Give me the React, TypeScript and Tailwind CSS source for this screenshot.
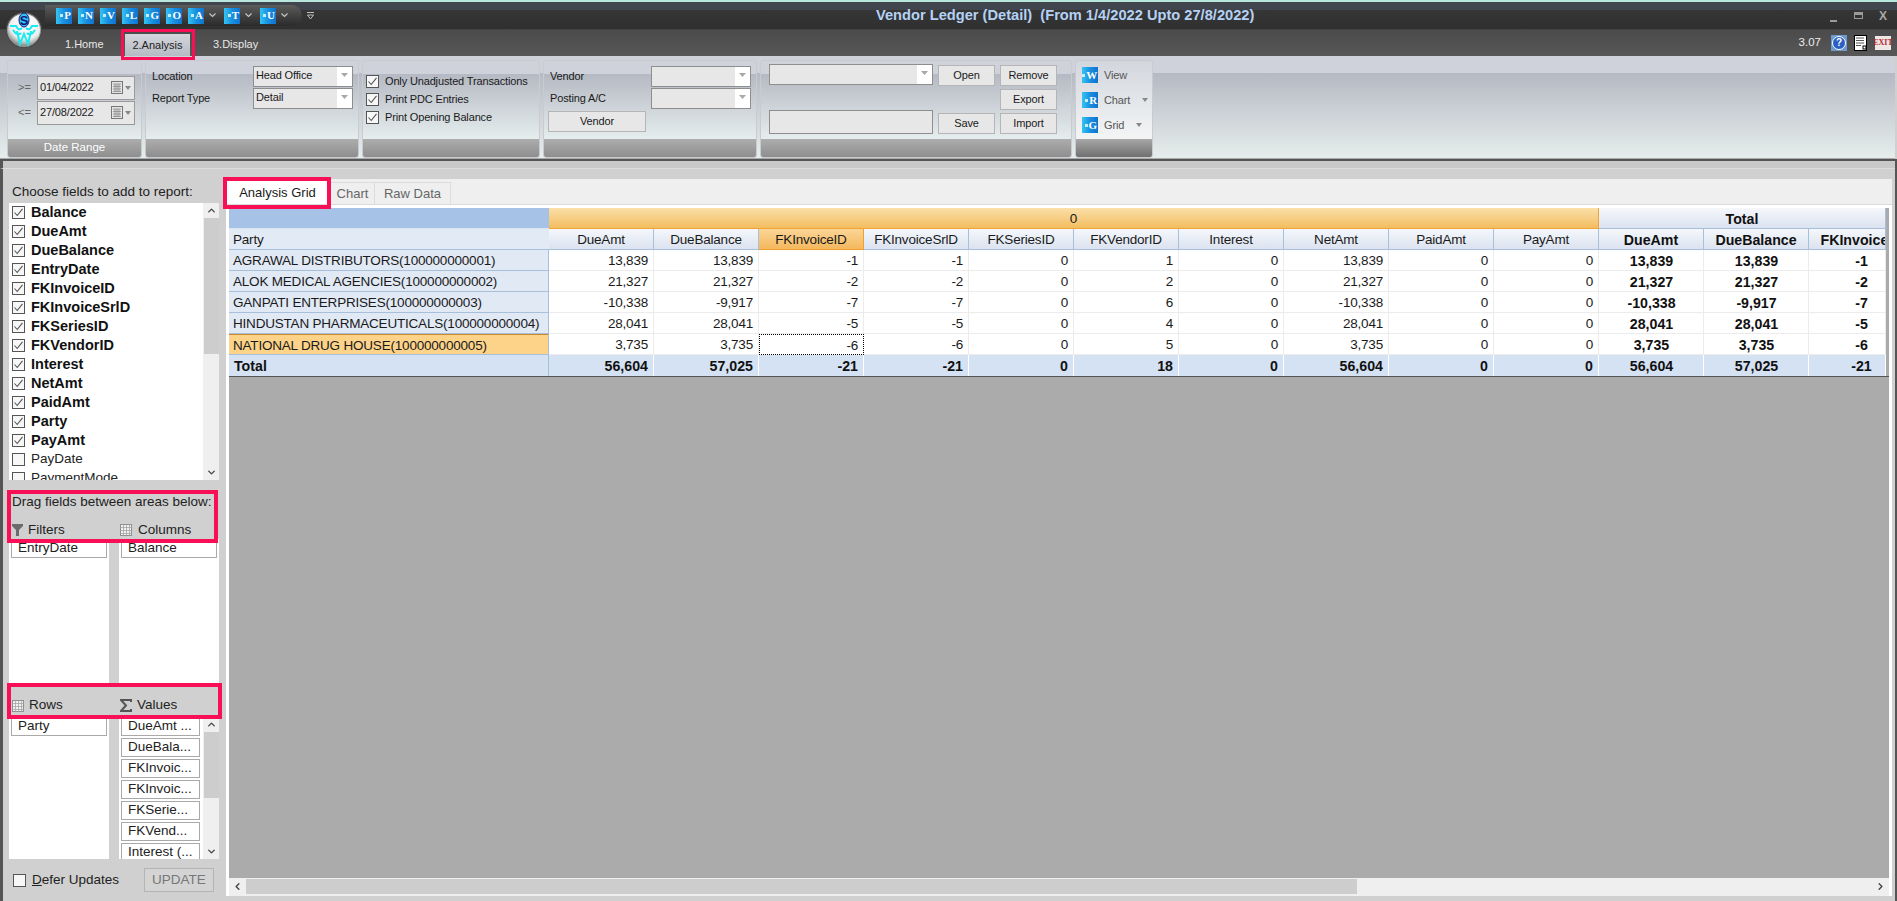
import { ChevronDown, ChevronLeft, ChevronRight, ChevronUp } from "lucide-react";

const FIELDS = [
  "Balance", "DueAmt", "DueBalance", "EntryDate", "FKInvoiceID", "FKInvoiceSrlD", "FKSeriesID",
  "FKVendorID", "Interest", "NetAmt", "PaidAmt", "Party", "PayAmt",
];

const COLS = [
  "DueAmt", "DueBalance", "FKInvoiceID", "FKInvoiceSrlD", "FKSeriesID", "FKVendorID",
  "Interest", "NetAmt", "PaidAmt", "PayAmt",
];

const ROWS: { name: string; v: string[]; t: string[] }[] = [
  { name: "AGRAWAL DISTRIBUTORS(100000000001)", v: ["13,839", "13,839", "-1", "-1", "0", "1", "0", "13,839", "0", "0"], t: ["13,839", "13,839", "-1"] },
  { name: "ALOK MEDICAL AGENCIES(100000000002)", v: ["21,327", "21,327", "-2", "-2", "0", "2", "0", "21,327", "0", "0"], t: ["21,327", "21,327", "-2"] },
  { name: "GANPATI ENTERPRISES(100000000003)", v: ["-10,338", "-9,917", "-7", "-7", "0", "6", "0", "-10,338", "0", "0"], t: ["-10,338", "-9,917", "-7"] },
  { name: "HINDUSTAN PHARMACEUTICALS(100000000004)", v: ["28,041", "28,041", "-5", "-5", "0", "4", "0", "28,041", "0", "0"], t: ["28,041", "28,041", "-5"] },
  { name: "NATIONAL DRUG HOUSE(100000000005)", v: ["3,735", "3,735", "-6", "-6", "0", "5", "0", "3,735", "0", "0"], t: ["3,735", "3,735", "-6"] },
];

const TOTALS = ["56,604", "57,025", "-21", "-21", "0", "18", "0", "56,604", "0", "0"];
const GRAND = ["56,604", "57,025", "-21"];

function Tile({ letter }: { letter: string }) {
  return (
    <span className="flex h-[16px] w-[16px] shrink-0 items-center justify-end bg-gradient-to-r from-[#35c4f2] via-[#1a8fe0] to-[#0f74cf] pr-[1px] font-['Liberation_Serif',serif] text-[11px] leading-none font-bold text-white">
      <span className="mr-[1px] h-[3px] w-[3px] bg-[#c7ecfb]" />
      {letter}
    </span>
  );
}

function SmallCaret({ color = "#c8c8c8" }: { color?: string }) {
  return (
    <svg width="7" height="5" viewBox="0 0 7 5" className="shrink-0">
      <path d="M0.5 0.5 L3.5 3.5 L6.5 0.5" fill="none" stroke={color} strokeWidth="1.2" />
    </svg>
  );
}

function Combo({ text, w }: { text?: string; w: string }) {
  return (
    <div className={`flex h-[21px] items-start justify-between border border-[#8e8e8e] bg-[#e7e7e7] pl-[2px] ${w}`}>
      <span className="pt-[1px] text-[11px] leading-[15px] tracking-[-0.15px]">{text}</span>
      <span className="flex h-full w-[15px] items-center justify-center bg-white pb-[3px]">
        <svg width="7" height="4" viewBox="0 0 7 4">
          <path d="M0 0 H7 L3.5 4 Z" fill="#a8a8a8" />
        </svg>
      </span>
    </div>
  );
}

function DateBox({ label, value }: { label: string; value: string }) {
  return (
    <div className="flex h-[25px] items-center">
      <span className="w-[20px] pl-[1px] text-[11px] text-[#666]">{label}</span>
      <div className="flex h-[24px] w-[98px] items-center border border-[#9a9a9a] bg-[#e7e7e7] pl-[2px]">
        <span className="w-[71px] text-[11px] tracking-[-0.15px]">{value}</span>
        <svg width="12" height="13" viewBox="0 0 12 13">
          <rect x="0.5" y="0.5" width="11" height="12" fill="#e4e4e4" stroke="#777" />
          <path d="M2 3 H10 M2 5.5 H10 M2 8 H10 M2 10.5 H10 M4 3 V11 M6 3 V11 M8 3 V11" stroke="#8a8a8a" strokeWidth="0.8" />
        </svg>
        <span className="ml-[2px]">
          <svg width="6" height="4" viewBox="0 0 6 4">
            <path d="M0 0 H6 L3 4 Z" fill="#888" />
          </svg>
        </span>
      </div>
    </div>
  );
}

function Check({ on }: { on: boolean }) {
  return (
    <span className="flex h-[13px] w-[13px] shrink-0 items-center justify-center border border-[#555] bg-[#f7f7f7]">
      {on && (
        <svg width="11" height="11" viewBox="0 0 11 11">
          <path d="M1.5 5.5 L4.2 8.5 L9.5 1.8" fill="none" stroke="#555" strokeWidth="1.1" />
        </svg>
      )}
    </span>
  );
}

function RibbonBtn({ text, w }: { text: string; w: string }) {
  return (
    <div className={`flex h-[21px] items-center justify-center border border-[#b5b5b5] bg-[#e7e7e7] text-[11px] tracking-[-0.15px] ${w}`}>
      {text}
    </div>
  );
}

function Group({ w, caption, children, light }: { w: string; caption?: string; children: React.ReactNode; light?: boolean }) {
  return (
    <div className={`flex h-[98px] flex-col overflow-hidden rounded-[3px] border border-[#c9cbd0] ${w}`}>
      <div
        className={`h-[78px] ${
          light
            ? "bg-gradient-to-b from-[#d3d6dd] to-[#f3f5f5]"
            : "bg-[linear-gradient(#cfd2da_0,#cfd2da_13px,#b5b9c3_13px,#e5eded_100%)]"
        }`}
      >
        {children}
      </div>
      <div
        className={`flex h-[18px] items-center justify-center text-[11.5px] text-white ${
          light ? "bg-gradient-to-b from-[#a8a8a8] to-[#707070]" : "bg-gradient-to-b from-[#adadad] to-[#8e8e8e]"
        }`}
      >
        {caption}
      </div>
    </div>
  );
}

function VScroll({ thumbH }: { thumbH: string }) {
  return (
    <div className="flex h-full w-[16px] shrink-0 flex-col items-center bg-[#efefef]">
      <div className="flex h-[15px] w-full shrink-0 items-center justify-center text-[#444]">
        <ChevronUp size={11} strokeWidth={3} />
      </div>
      <div className={`w-[15px] shrink-0 bg-[#cdcdcd] ${thumbH}`} />
      <div className="mt-auto flex h-[15px] w-full shrink-0 items-center justify-center text-[#444]">
        <ChevronDown size={11} strokeWidth={3} />
      </div>
    </div>
  );
}

function Pill({ text, w }: { text: string; w: string }) {
  return (
    <div className={`mb-[2px] flex h-[19px] shrink-0 items-center overflow-hidden border border-[#a9a9a9] bg-white pl-[6px] text-[13.5px] whitespace-nowrap text-[#222] ${w}`}>
      {text}
    </div>
  );
}

function GridIcon() {
  return (
    <svg width="12" height="12" viewBox="0 0 12 12">
      <rect x="0.5" y="0.5" width="11" height="11" fill="#f1f1f1" stroke="#8f8f8f" />
      <path d="M0.5 3.5 H11.5 M0.5 6.5 H11.5 M0.5 9.5 H11.5 M3.5 0.5 V11.5 M6.5 0.5 V11.5 M9.5 0.5 V11.5" stroke="#a5a5a5" strokeWidth="0.8" />
    </svg>
  );
}

const cell = "flex h-[21px] items-center overflow-hidden whitespace-nowrap pt-[3px] text-[13.5px] tracking-[-0.2px] text-[#1a1a1a]";
const boldCell = "flex h-[21px] items-center overflow-hidden whitespace-nowrap pt-[3px] text-[14.2px] font-bold text-[#111]";
const colHeader = "bg-gradient-to-b from-[#f5f7fb] to-[#dbe3f0] border-r border-b border-[#a8bfdb]";

export default function App() {
  return (
    <div className="relative flex h-[901px] w-[1897px] flex-col overflow-hidden bg-[#d0d0d0] font-['Liberation_Sans',sans-serif] text-[#1a1a1a]">
      <div className="h-[2px] shrink-0 bg-[#b9e6dd]" />

      {/* title bar */}
      <div className="flex h-[28px] shrink-0 items-center border-b border-[#444] bg-[linear-gradient(#41454e_0,#41454e_8px,#363636_8px,#2f2f2f_100%)]">
        <div className="ml-[45px] flex h-[21px] w-[257px] items-center rounded-r-full bg-gradient-to-b from-[#5c5c5c] to-[#2b2b2b] pl-[11px]">
          {["P", "N", "V", "L", "G", "O"].map((l) => (
            <span key={l} className="mr-[6px]">
              <Tile letter={l} />
            </span>
          ))}
          <Tile letter="A" />
          <span className="mr-[8px] ml-[5px]"><SmallCaret /></span>
          <Tile letter="T" />
          <span className="mr-[8px] ml-[5px]"><SmallCaret /></span>
          <Tile letter="U" />
          <span className="ml-[5px]"><SmallCaret /></span>
        </div>
        <svg width="7" height="8" viewBox="0 0 7 8" className="ml-[5px]">
          <path d="M0 0.5 H7 M0.5 3 L3.5 7 L6.5 3 Z" fill="none" stroke="#bdbdbd" />
        </svg>
        <div className="ml-[562px] text-[14.65px] font-bold whitespace-pre text-[#b4d2f5]">
          Vendor Ledger (Detail)  (From 1/4/2022 Upto 27/8/2022)
        </div>
        <div className="ml-auto flex items-center pr-[10px]">
          <span className="mt-[10px] h-[2px] w-[7px] bg-[#9a9a9a]" />
          <span className="ml-[17px] h-[7px] w-[9px] border border-t-[3px] border-[#9a9a9a]" />
          <span className="ml-[16px] text-[12px] leading-none font-bold text-[#a8a8a8]">X</span>
        </div>
      </div>

      {/* tab row */}
      <div className="flex h-[26px] shrink-0 items-center bg-gradient-to-b from-[#4b4b4b] to-[#575757] text-[11px] text-[#e8e8e8]">
        <span className="mt-[2px] ml-[65px] w-[60px]">1.Home</span>
        <span className="flex h-[22px] w-[65px] items-center justify-center self-end bg-gradient-to-b from-[#d4d6dc] to-[#b6bac4] text-[#222]">2.Analysis</span>
        <span className="mt-[2px] ml-[23px]">3.Display</span>
        <div className="ml-auto flex items-center">
          <span className="mr-[10px] text-[11.5px] text-[#eee]">3.07</span>
          <span className="mr-[7px] flex h-[16px] w-[16px] items-center justify-center bg-[#6d9bd0]">
            <span className="flex h-[14px] w-[14px] items-center justify-center rounded-full border border-white bg-[#2b5fc4] text-[10px] leading-none font-bold text-white">?</span>
          </span>
          <svg width="14" height="16" viewBox="0 0 14 16" className="mr-[7px]">
            <rect x="0.5" y="0.5" width="12" height="15" fill="#fff" stroke="#000" />
            <path d="M2 3 H10 M2 5.5 H10 M2 8 H10 M2 10.5 H7" stroke="#555" />
            <rect x="9" y="11" width="3" height="3" fill="#fff" stroke="#000" />
          </svg>
          <span className="mr-[6px] flex h-[14px] w-[16px] items-center justify-center bg-[#efe6e6] font-['Liberation_Serif',serif] text-[8px] leading-none font-bold text-[#b02a30]">EXIT</span>
        </div>
      </div>

      {/* ribbon */}
      <div className="mr-[2px] flex h-[103px] shrink-0 gap-[3px] rounded-tr-[3px] border-b border-[#aaa] bg-[linear-gradient(#cfd2da_0,#cfd2da_17px,#b5b9c3_17px,#e6eeec_100%)] pt-[4px] pl-[7px]">
        <Group w="w-[135px]" caption="Date Range">
          <div className="pt-[14px] pl-[9px]">
            <DateBox label=">=" value="01/04/2022" />
            <DateBox label="<=" value="27/08/2022" />
          </div>
        </Group>
        <Group w="w-[214px]">
          <div className="grid grid-cols-[101px_100px] items-center gap-y-[1px] pt-[5px] pl-[6px] text-[11px] tracking-[-0.15px]">
            <span>Location</span>
            <Combo text="Head Office" w="w-[100px]" />
            <span>Report Type</span>
            <Combo text="Detail" w="w-[100px]" />
          </div>
        </Group>
        <Group w="w-[178px]">
          <div className="flex flex-col pt-[11px] pl-[3px] text-[11px] tracking-[-0.15px]">
            {["Only Unadjusted Transactions", "Print PDC Entries", "Print Opening Balance"].map((t) => (
              <div key={t} className="flex h-[18px] items-center gap-[6px]">
                <Check on />
                {t}
              </div>
            ))}
          </div>
        </Group>
        <Group w="w-[214px]">
          <div className="pt-[5px] pl-[6px] text-[11px] tracking-[-0.15px]">
            <div className="grid grid-cols-[101px_100px] items-center gap-y-[1px]">
              <span>Vendor</span>
              <Combo w="w-[100px]" />
              <span>Posting A/C</span>
              <Combo w="w-[100px]" />
            </div>
            <div className="mt-[2px] -ml-[2px]">
              <RibbonBtn text="Vendor" w="w-[98px]" />
            </div>
          </div>
        </Group>
        <Group w="w-[312px]">
          <div className="flex h-[73px] gap-[5px] pt-[3px] pl-[8px]">
            <div className="flex w-[164px] flex-col justify-between">
              <Combo w="w-[164px]" />
              <div className="h-[24px] w-[164px] border border-[#8e8e8e] bg-[#e7e7e7]" />
            </div>
            <div className="flex w-[57px] flex-col justify-between pt-[1px]">
              <RibbonBtn text="Open" w="w-[57px]" />
              <RibbonBtn text="Save" w="w-[57px]" />
            </div>
            <div className="flex w-[57px] flex-col justify-between pt-[1px]">
              <RibbonBtn text="Remove" w="w-[57px]" />
              <RibbonBtn text="Export" w="w-[57px]" />
              <RibbonBtn text="Import" w="w-[57px]" />
            </div>
          </div>
        </Group>
        <Group w="w-[78px]" light>
          <div className="flex flex-col gap-[9px] pt-[6px] pl-[6px] text-[11px] tracking-[-0.15px] text-[#555]">
            <div className="flex h-[16px] items-center gap-[6px]"><Tile letter="W" />View</div>
            <div className="flex h-[16px] items-center gap-[6px]">
              <Tile letter="R" />Chart
              <svg width="6" height="4" viewBox="0 0 6 4" className="ml-[6px]"><path d="M0 0 H6 L3 4 Z" fill="#888" /></svg>
            </div>
            <div className="flex h-[16px] items-center gap-[6px]">
              <Tile letter="G" />Grid
              <svg width="6" height="4" viewBox="0 0 6 4" className="ml-[6px]"><path d="M0 0 H6 L3 4 Z" fill="#888" /></svg>
            </div>
          </div>
        </Group>
      </div>
      <div className="h-[2px] shrink-0 bg-[#555]" />

      {/* body */}
      <div className="h-[8px] shrink-0 border-b border-l-[3px] border-b-[#dcdcdc] border-l-[#555] bg-[#c9c9c9]" />
      <div className="flex min-h-0 flex-1 border-l-[3px] border-[#555]">
        {/* field chooser */}
        <div className="flex w-[223px] shrink-0 flex-col pl-[6px] text-[13.5px] text-[#222]">
          <div className="h-[34px] pt-[15px] pl-[3px] leading-[16px] whitespace-nowrap">Choose fields to add to report:</div>
          <div className="flex h-[277px] w-[210px] overflow-hidden bg-white">
            <div className="flex-1 overflow-hidden">
              {FIELDS.map((f) => (
                <div key={f} className="flex h-[19px] items-center gap-[6px] pl-[3px] text-[14.5px] font-bold text-[#111]">
                  <Check on />
                  {f}
                </div>
              ))}
              {["PayDate", "PaymentMode"].map((f) => (
                <div key={f} className="flex h-[19px] items-center gap-[6px] pl-[3px] text-[13.5px] text-[#222]">
                  <Check on={false} />
                  {f}
                </div>
              ))}
            </div>
            <VScroll thumbH="h-[136px]" />
          </div>

          <div className="h-[32px] pt-[14px] pl-[3px] leading-[16px] whitespace-nowrap">Drag fields between areas below:</div>
          <div className="grid h-[27px] grid-cols-[100px_100px] gap-x-[10px] pt-[8px]">
            <div className="flex items-center gap-[5px] pl-[3px]">
              <svg width="11" height="12" viewBox="0 0 11 12"><path d="M0 0 H11 V2 L7 6 V12 L4 12 V6 L0 2 Z" fill="#6b6b6b" /></svg>
              Filters
            </div>
            <div className="flex items-center gap-[6px] pl-[1px]"><GridIcon />Columns</div>
          </div>
          <div className="grid h-[144px] grid-cols-[100px_100px] gap-x-[10px]">
            <div className="bg-white px-[2px]"><Pill text="EntryDate" w="w-[96px]" /></div>
            <div className="bg-white px-[2px]"><Pill text="Balance" w="w-[96px]" /></div>
          </div>
          <div className="grid h-[34px] grid-cols-[100px_100px] gap-x-[10px] pt-[11px]">
            <div className="flex items-center gap-[5px] pl-[3px]"><GridIcon />Rows</div>
            <div className="flex items-center gap-[5px] pl-[1px]">
              <svg width="12" height="13" viewBox="0 0 12 13"><path d="M11 3 V1 H1 L6 6.5 L1 12 H11 V10" fill="none" stroke="#555" strokeWidth="2" /></svg>
              Values
            </div>
          </div>
          <div className="grid h-[142px] grid-cols-[100px_100px] gap-x-[10px]">
            <div className="bg-white px-[2px]"><Pill text="Party" w="w-[96px]" /></div>
            <div className="flex h-[142px] overflow-hidden bg-white pl-[2px]">
              <div className="flex w-[82px] flex-col">
                {["DueAmt ...", "DueBala...", "FKInvoic...", "FKInvoic...", "FKSerie...", "FKVend...", "Interest (..."].map((v, i) => (
                  <Pill key={i} text={v} w="w-[79px]" />
                ))}
              </div>
              <VScroll thumbH="h-[66px]" />
            </div>
          </div>
          <div className="mt-[9px] flex h-[24px] items-center">
            <span className="ml-[4px]"><Check on={false} /></span>
            <span className="ml-[6px] w-[112px]"><span className="underline">D</span>efer Updates</span>
            <span className="flex h-[24px] w-[70px] items-center justify-center border border-[#b4b4b4] bg-[#d4d4d4] text-[#777]">UPDATE</span>
          </div>
        </div>

        {/* pivot area */}
        <div className="mt-[10px] mb-[5px] flex w-[1666px] shrink-0 flex-col bg-[#efefef]">
          <div className="flex h-[25px] shrink-0 items-end text-[13px]">
            <div className="mr-[2px] flex h-[26px] w-[103px] items-center justify-center bg-white pt-[3px]">Analysis Grid</div>
            <div className="flex h-[22px] w-[44px] items-center justify-center border-t border-r border-[#dcdcdc] text-[#666]">Chart</div>
            <div className="flex h-[22px] w-[76px] items-center justify-center border-t border-r border-[#dcdcdc] text-[#666]">Raw Data</div>
          </div>
          <div className="flex min-h-0 flex-1 flex-col border-t border-[#dadada] bg-white px-[3px] pt-[3px]">
            <div className="min-h-0 flex-1 overflow-hidden bg-[#ababab]">
              <div className="grid grid-cols-[320px_repeat(12,105px)_77px] grid-rows-[21px_repeat(7,21px)] border-b border-[#555]">
                {/* band row */}
                <div className="h-[21px] border-b border-[#dbe5f2] bg-[#a6c2e6]" />
                <div className="col-span-10 flex h-[21px] items-center justify-center border-r border-b border-[#f0a53a] bg-gradient-to-b from-[#fadfa8] to-[#f3bd5e] pt-[3px] text-[13.5px]">0</div>
                <div className={`col-span-3 ${boldCell} justify-center ${colHeader}`}>Total</div>

                {/* column headers */}
                <div className={`${cell} border-b border-[#a8bfdb] bg-[#e2eaf5] pl-[4px]`}>Party</div>
                {COLS.map((c) => (
                  <div
                    key={c}
                    className={`${cell} justify-center ${
                      c === "FKInvoiceID"
                        ? "border-r border-b border-[#f0a030] bg-gradient-to-b from-[#fbd596] to-[#f4b85c]"
                        : colHeader
                    }`}
                  >
                    {c}
                  </div>
                ))}
                <div className={`${boldCell} justify-center ${colHeader}`}>DueAmt</div>
                <div className={`${boldCell} justify-center ${colHeader}`}>DueBalance</div>
                <div className={`${boldCell} ${colHeader}`}>
                  <span className="w-[105px] shrink-0 text-center">FKInvoiceID</span>
                </div>

                {/* data rows */}
                {ROWS.map((r, ri) => (
                  <div key={r.name} className="contents">
                    <div
                      className={`${cell} border-r border-b border-[#a8bfdb] pl-[4px] ${
                        ri === 4 ? "border-t border-t-[#c98a2e] bg-[#fdd38a]" : "bg-[#e1e9f5]"
                      }`}
                    >
                      {r.name}
                    </div>
                    {r.v.map((v, i) => (
                      <div
                        key={i}
                        className={`${cell} justify-end bg-white pr-[5px] ${
                          ri === 4 && i === 2
                            ? "border border-dotted border-black"
                            : "border-r border-b border-[#ececec]"
                        }`}
                      >
                        {v}
                      </div>
                    ))}
                    {r.t.map((v, i) => (
                      <div key={i} className={`${boldCell} border-r border-b border-[#ececec] bg-white`}>
                        <span className="w-[105px] shrink-0 text-center">{v}</span>
                      </div>
                    ))}
                  </div>
                ))}

                {/* totals */}
                <div className={`${boldCell} border-r border-[#a8bfdb] bg-[#d5e2f3] pl-[5px]`}>Total</div>
                {TOTALS.map((v, i) => (
                  <div key={i} className={`${boldCell} justify-end border-r border-white bg-[#d5e2f3] pr-[5px]`}>{v}</div>
                ))}
                {GRAND.map((v, i) => (
                  <div key={i} className={`${boldCell} border-r border-white bg-[#d5e2f3]`}>
                    <span className="w-[105px] shrink-0 text-center">{v}</span>
                  </div>
                ))}
              </div>
            </div>
            <div className="flex h-[18px] shrink-0 items-center bg-[#efefef] pb-[2px] text-[#444]">
              <span className="flex w-[17px] justify-center"><ChevronLeft size={11} strokeWidth={3} /></span>
              <span className="h-[15px] w-[1111px] bg-[#cdcdcd]" />
              <span className="ml-auto flex w-[17px] justify-center"><ChevronRight size={11} strokeWidth={3} /></span>
            </div>
          </div>
        </div>
        <div className="w-[3px] shrink-0" />
      </div>

      {/* window right edge */}
      <div className="absolute top-[161px] right-0 bottom-0 w-[2px] bg-[#555]" />

      {/* red call-outs drawn over the screenshot */}
      <div className="absolute top-[29px] left-[121px] h-[31px] w-[74px] border-[3px] border-[#f90f56]" />
      <div className="absolute top-[177px] left-[223px] h-[32px] w-[108px] border-4 border-[#f90f56]" />
      <div className="absolute top-[490px] left-[7px] h-[53px] w-[211px] border-4 border-[#f90f56]" />
      <div className="absolute top-[683px] left-[7px] h-[36px] w-[215px] border-4 border-[#f90f56]" />

      {/* logo */}
      <div className="absolute top-[11px] left-[5px]">
        <svg width="38" height="38" viewBox="0 0 38 38">
          <defs>
            <radialGradient id="lg" cx="55%" cy="30%" r="70%">
              <stop offset="0" stopColor="#ffffff" />
              <stop offset="0.7" stopColor="#eceeee" />
              <stop offset="1" stopColor="#7f7f7f" />
            </radialGradient>
          </defs>
          <circle cx="19" cy="19" r="18" fill="#4a4a4a" />
          <circle cx="19" cy="19" r="16.5" fill="url(#lg)" stroke="#9a9a9a" />
          <ellipse cx="19" cy="9" rx="5" ry="7" fill="#2fc4ee" stroke="#12127e" />
          <text x="19" y="13.5" textAnchor="middle" fontSize="13" fontWeight="bold" fill="#10107a" fontFamily="Liberation Sans">S</text>
          <path d="M5 15 H11 C13 19 15 19 17 17 M33 15 H27 C25 19 23 19 21 17 M12 20 L15 33 L19 23 L23 33 L26 20 M8 19 C11 24 14 24 16 22 M30 19 C27 24 24 24 22 22" fill="none" stroke="#18ecf0" strokeWidth="2" />
        </svg>
      </div>
    </div>
  );
}
